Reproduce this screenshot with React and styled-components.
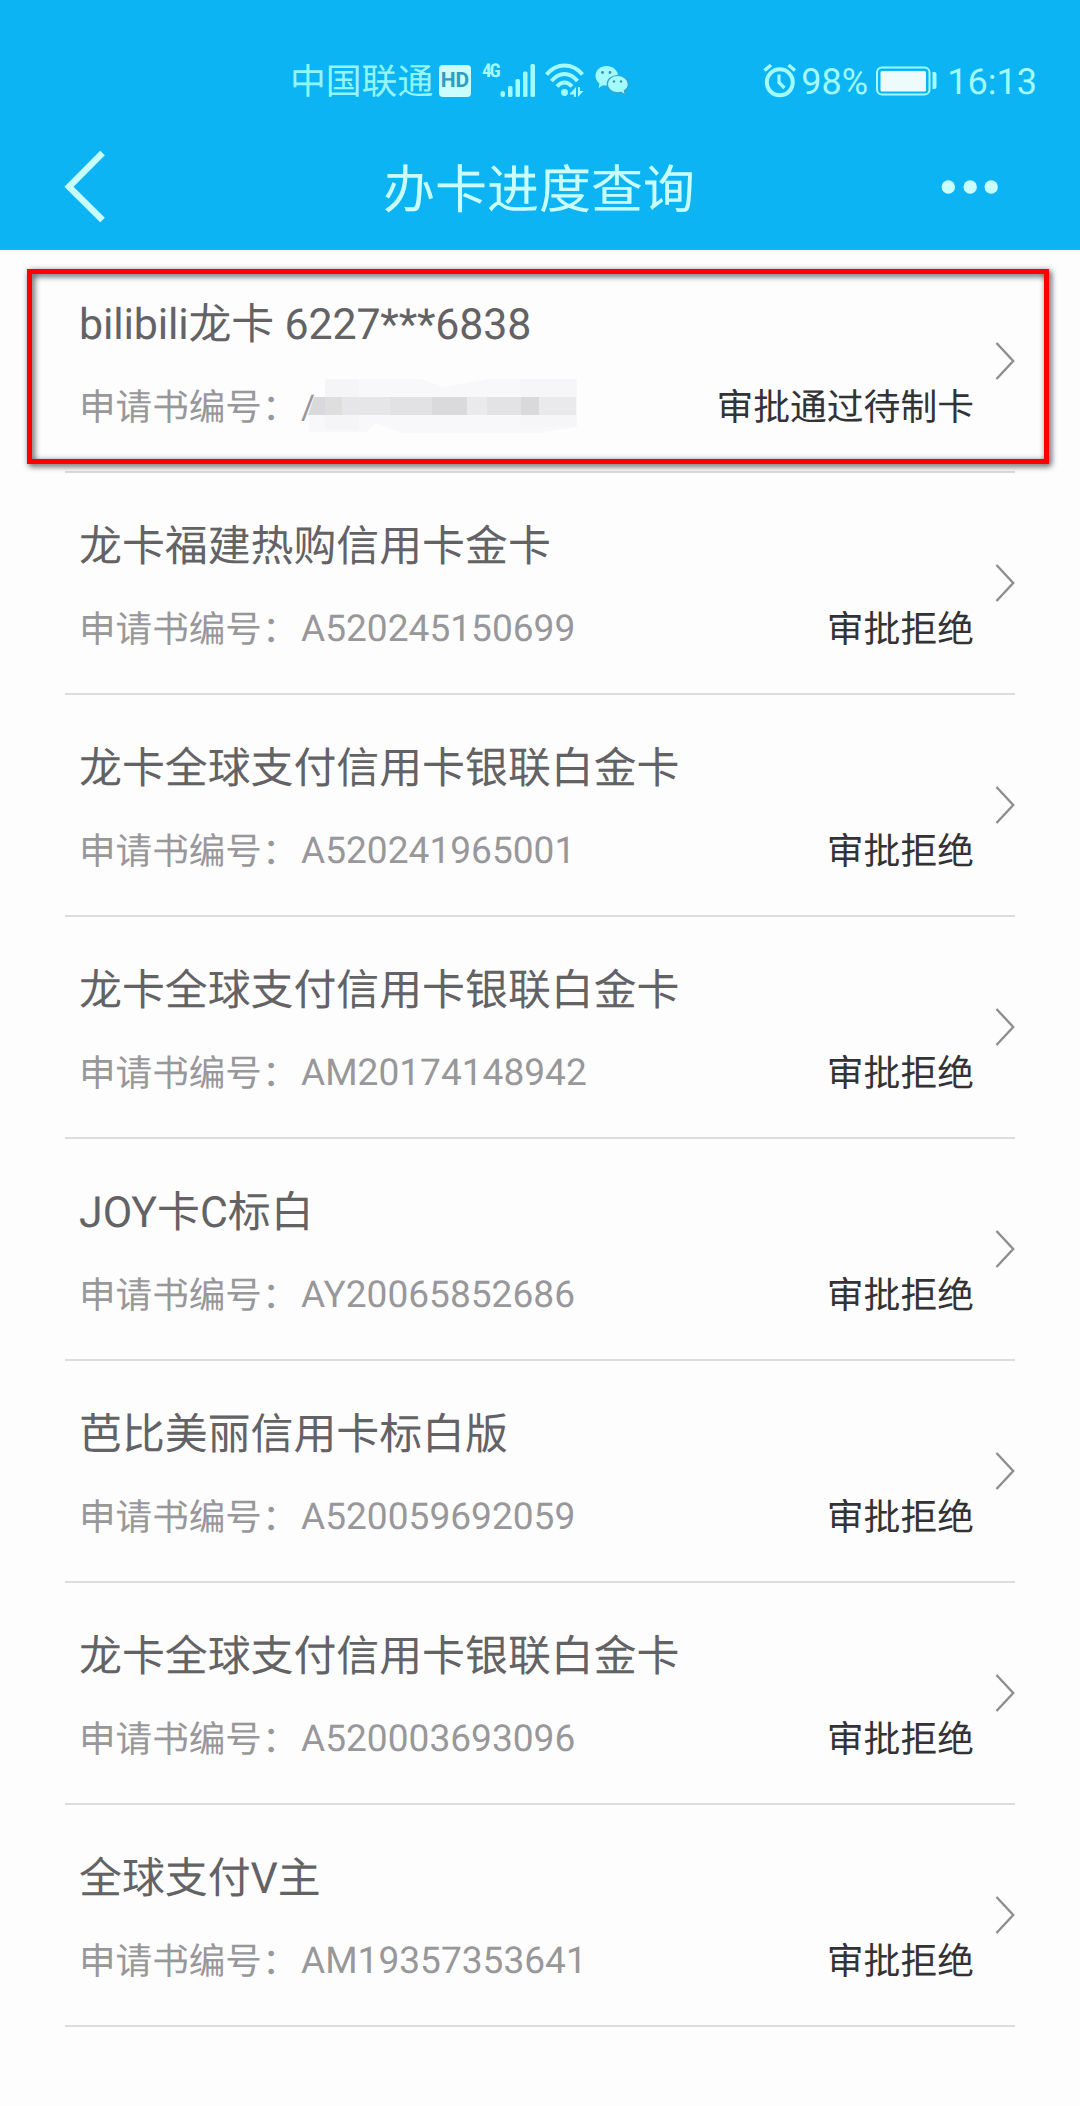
import React from "react";
import styled, { createGlobalStyle } from "styled-components";

const records = [
  { name: "bilibili龙卡 6227***6838", masked: true, status: "审批通过待制卡", active: true },
  { name: "龙卡福建热购信用卡金卡", number: "A520245150699", status: "审批拒绝" },
  { name: "龙卡全球支付信用卡银联白金卡", number: "A520241965001", status: "审批拒绝" },
  { name: "龙卡全球支付信用卡银联白金卡", number: "AM20174148942", status: "审批拒绝" },
  { name: "JOY卡C标白", number: "AY20065852686", status: "审批拒绝" },
  { name: "芭比美丽信用卡标白版", number: "A520059692059", status: "审批拒绝" },
  { name: "龙卡全球支付信用卡银联白金卡", number: "A520003693096", status: "审批拒绝" },
  { name: "全球支付V主", number: "AM19357353641", status: "审批拒绝" },
];

const SignalIcon = () => (
  <svg width="36" height="36" viewBox="0 0 36 36" fill="currentColor">
    <rect x="0.5" y="28" width="4.5" height="6" rx="2" />
    <rect x="8" y="23" width="4.5" height="11" rx="1.5" />
    <rect x="15.5" y="16" width="4.5" height="18" rx="1.5" />
    <rect x="23" y="8.5" width="4.5" height="25.5" rx="1.5" />
    <rect x="30.5" y="1" width="4.5" height="33" rx="1.5" />
  </svg>
);

const WifiIcon = () => (
  <svg width="40" height="36" viewBox="0 0 40 36" fill="none" stroke="currentColor">
    <path d="M1.5 11.5C11.5 -0.5 27.5 -0.5 37.5 11.5" strokeWidth="4" />
    <path d="M6.5 18C14 8.5 25 8.5 32.5 18" strokeWidth="4" />
    <path d="M12 23.5C16.5 18 22.5 18 27 23.5" strokeWidth="4" />
    <circle cx="19.5" cy="29.5" r="3.4" fill="currentColor" stroke="none" />
    <path d="M25 30.5L31 24V34H29V31.5H25Z M33 24V34L38.5 28H35V24Z" fill="currentColor" stroke="none" />
  </svg>
);

const WechatIcon = () => (
  <svg width="34" height="32" viewBox="0 0 34 32">
    <path d="M11.5 1C5.5 1 0.5 5.2 0.5 10.8C0.5 14 2 16.8 4.5 18.6L3.5 23L8 20.2C9.2 20.5 10.2 20.6 12 20.5C16 20 23 17 23 10.8C23 5.2 17.5 1 11.5 1Z" fill="currentColor" />
    <path d="M22.5 10.5C16.8 10.5 12.3 14.3 12.3 19.2C12.3 24 16.8 27.8 22.5 27.8C23.8 27.8 25 27.6 26 27.3L30.5 30L29.3 25.8C31.8 24.2 33.3 21.8 33.3 19.2C33.3 14.3 28.5 10.5 22.5 10.5Z" fill="currentColor" stroke="#35a3c8" strokeWidth="1.2" />
    <g fill="#3b93ad">
      <circle cx="7.5" cy="7.5" r="1.4" />
      <circle cx="15" cy="7.5" r="1.4" />
      <circle cx="19" cy="16.5" r="1.2" />
      <circle cx="26" cy="16.5" r="1.2" />
    </g>
  </svg>
);

const AlarmIcon = () => (
  <svg width="34" height="36" viewBox="0 0 34 36" fill="none" stroke="currentColor">
    <circle cx="16.8" cy="19.3" r="13" strokeWidth="4" />
    <path d="M1.5 7.5L8 2M32 7.5L25.5 2" strokeWidth="3.6" />
    <path d="M16 11.5V19.5L21.5 25" strokeWidth="3.2" />
  </svg>
);

const BatteryIcon = () => (
  <svg width="62" height="30" viewBox="0 0 62 30">
    <rect x="1" y="1.5" width="52.5" height="27" rx="5" fill="none" stroke="currentColor" strokeWidth="2" />
    <rect x="4.5" y="5" width="45.5" height="20.5" rx="1.5" fill="#edfbfb" />
    <path d="M56.5 6H58.5Q60.5 6 60.5 8V21Q60.5 23 58.5 23H56.5Z" fill="currentColor" />
  </svg>
);

const BackIcon = () => (
  <svg width="42" height="74" viewBox="0 0 42 74" fill="none" stroke="currentColor" strokeWidth="6.5">
    <path d="M38.5 3L5 36.7L38.5 70" />
  </svg>
);

const MoreIcon = () => (
  <svg width="58" height="16" viewBox="0 0 58 16" fill="currentColor">
    <circle cx="7.3" cy="8" r="6.7" />
    <circle cx="29.2" cy="8" r="6.7" />
    <circle cx="50.2" cy="8" r="6.7" />
  </svg>
);

const ChevronIcon = () => (
  <svg width="20" height="38" viewBox="0 0 20 38" fill="none" stroke="#8e8e90" strokeWidth="2.4">
    <path d="M1.5 1L18.2 19L1.5 37" />
  </svg>
);

const Mosaic = () => (
  <MosaicSvg width="270" height="64" viewBox="0 0 270 64">
    <path d="M17 4H112L137 12L180 4H269V52L230 58H95L68 48L58 57H0L2 40L17 20Z" fill="#f8f7f9" />
    <rect x="17" y="5" width="34" height="50" fill="#f5f4f6" />
    <rect x="212" y="4" width="56" height="48" fill="#f6f5f7" />
    <path d="M6 22H17V40H0Z" fill="#d9d9dc" />
    <rect x="17" y="22" width="17" height="18" fill="#dededf" />
    <rect x="34" y="22" width="48" height="18" fill="#e6e5e7" />
    <rect x="82" y="22" width="42" height="18" fill="#e2e1e3" />
    <rect x="124" y="22" width="35" height="18" fill="#dad9dc" />
    <rect x="159" y="22" width="20" height="18" fill="#eae9eb" />
    <rect x="179" y="22" width="34" height="18" fill="#e3e2e4" />
    <rect x="213" y="22" width="18" height="18" fill="#d9d8db" />
    <rect x="231" y="22" width="37" height="18" fill="#eae9eb" />
  </MosaicSvg>
);

const Record = ({ record }) => (
  <Row>
    <CardName $tight={record.active}>{record.name}</CardName>
    <Detail>
      <Label>申请书编号：</Label>
      {record.masked ? (
        <MaskedNumber>
          <span>/</span>
          <Mosaic />
        </MaskedNumber>
      ) : (
        <Number>{record.number}</Number>
      )}
      <Status>{record.status}</Status>
    </Detail>
    <Arrow>
      <ChevronIcon />
    </Arrow>
    {record.active && <Highlight />}
  </Row>
);

const App = () => {
  return (
    <Page>
      <GlobalStyle />
      <Header>
        <StatusBar>
          <Carrier>中国联通</Carrier>
          <HdBadge>HD</HdBadge>
          <Network>4G</Network>
          <SignalIcon />
          <WifiWrap>
            <WifiIcon />
          </WifiWrap>
          <WechatIcon />
          <StatusRight>
            <AlarmIcon />
            <Battery>98%</Battery>
            <BatteryIcon />
            <Time>16:13</Time>
          </StatusRight>
        </StatusBar>
        <NavBar>
          <BackIcon />
          <Title>办卡进度查询</Title>
          <MoreIcon />
        </NavBar>
      </Header>
      <List>
        {records.map((record, index) => (
          <Record key={index} record={record} />
        ))}
      </List>
    </Page>
  );
};

export default App;

const GlobalStyle = createGlobalStyle`
  body {
    margin: 0;
    background: #fdfdfe;
  }

  svg {
    display: block;
    flex-shrink: 0;
  }
`;

const Page = styled.div`
  width: 1080px;
  height: 2106px;
  overflow: hidden;
  background: #fdfdfe;
  font-family: Roboto, "Noto Sans CJK SC", sans-serif;
  text-rendering: geometricPrecision;
`;

const Header = styled.header`
  height: 250px;
  box-sizing: border-box;
  padding-top: 58px;
  background: #0cb4f3;
  border-bottom: 1px solid #4ba6c6;
`;

const StatusBar = styled.div`
  display: flex;
  align-items: center;
  height: 46px;
  padding: 0 43px 0 290px;
  color: #a3fbfd;
  white-space: nowrap;
`;

const Carrier = styled.span`
  width: 149px;
  padding-top: 2px;
  font-size: 35.8px;
  line-height: 46px;
  color: #93f5fc;
`;

const HdBadge = styled.span`
  width: 32px;
  height: 32px;
  border-radius: 4px;
  background: #ccfdfd;
  color: #2f9cc0;
  font-size: 21px;
  font-weight: 700;
  line-height: 32px;
  text-align: center;
`;

const Network = styled.span`
  width: 18px;
  margin: 0 0 20px 11px;
  font-family: "Roboto Condensed", Roboto, sans-serif;
  font-size: 19px;
  font-weight: 700;
  letter-spacing: -2px;
  line-height: 20px;
`;

const WifiWrap = styled.div`
  margin: 0 10px 0 9px;
`;

const StatusRight = styled.div`
  display: flex;
  align-items: center;
  margin-left: auto;
`;

const Battery = styled.span`
  width: 75px;
  margin-left: 4px;
  padding-top: 2px;
  box-sizing: border-box;
  font-size: 36px;
  line-height: 46px;
`;

const Time = styled.span`
  margin-left: 9px;
  padding-top: 2px;
  font-size: 36px;
  line-height: 46px;
`;

const NavBar = styled.div`
  display: flex;
  align-items: center;
  height: 74px;
  margin-top: 46px;
  padding: 0 81px 0 64px;
  color: #c9ffff;
`;

const Title = styled.h1`
  margin: 0 auto 0 277px;
  padding-top: 7px;
  font-size: 52px;
  font-weight: 400;
  line-height: 74px;
`;

const List = styled.div`
  padding: 1px 65px 0;
`;

const Row = styled.div`
  position: relative;
  height: 222px;
  box-sizing: border-box;
  padding: 44px 41px 0 14px;
  border-bottom: 2px solid #dcdbde;
  white-space: nowrap;
`;

const CardName = styled.div`
  font-size: 42.9px;
  line-height: 60px;
  letter-spacing: ${(props) => (props.$tight ? "-0.15px" : "normal")};
  color: #636265;
`;

const Detail = styled.div`
  display: flex;
  align-items: center;
  height: 56px;
  margin-top: 25px;
`;

const Label = styled.span`
  width: 222px;
  font-size: 36.6px;
  line-height: 56px;
  color: #98979a;
`;

const Number = styled.span`
  font-size: 37.1px;
  line-height: 56px;
  color: #98979a;
`;

const MaskedNumber = styled.span`
  display: flex;
  align-items: center;
  font-size: 34px;
  line-height: 56px;
  color: #98979a;
`;

const MosaicSvg = styled.svg`
  margin: -3px 0 0 -7px;
`;

const Status = styled.span`
  margin-left: auto;
  font-size: 36.8px;
  line-height: 56px;
  color: #333235;
`;

const Arrow = styled.div`
  position: absolute;
  top: 91px;
  right: 0;
`;

const Highlight = styled.div`
  position: absolute;
  top: 18px;
  left: -38px;
  width: 1022px;
  height: 195px;
  box-sizing: border-box;
  border: 5px solid #fe0000;
  filter: drop-shadow(2px 2px 3px rgba(0, 0, 0, 0.75));
`;
